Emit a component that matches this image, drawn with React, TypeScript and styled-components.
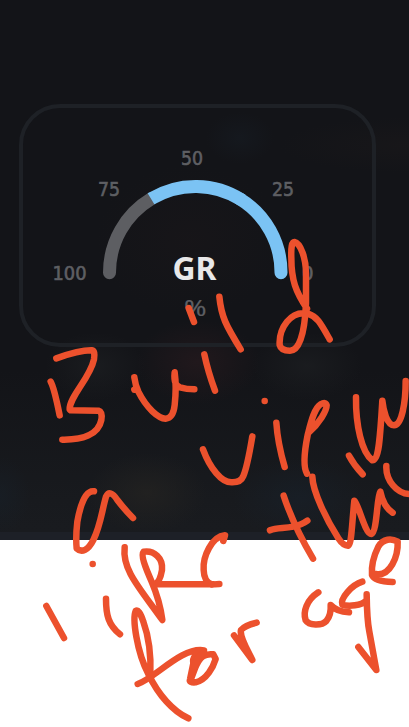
import React from "react";
import styled, { createGlobalStyle } from "styled-components";

const GlobalStyle = createGlobalStyle`
  body { margin: 0; background: #fff; overflow: hidden; }
`;

const Page = styled.main`
  position: relative;
  width: 409px;
  height: 727px;
  overflow: hidden;
  background: #fff;
`;

const Screen = styled.section`
  box-sizing: border-box;
  display: flex;
  flex-direction: column;
  height: 540px;
  padding-top: 104px;
  background:
    radial-gradient(ellipse 62px 42px at 198px 362px, #24191dd0, #24191d00),
    radial-gradient(ellipse 50px 34px at 95px 366px, #1d1f22b0, #1d1f2200),
    radial-gradient(ellipse 55px 34px at 307px 366px, #1d1f22b0, #1d1f2200),
    radial-gradient(ellipse 60px 40px at 147px 493px, #242321c0, #24232100),
    radial-gradient(ellipse 65px 40px at 298px 498px, #182029b0, #18202900),
    radial-gradient(ellipse 30px 40px at 0px 496px, #171f27a0, #171f2700),
    radial-gradient(ellipse 34px 26px at 240px 138px, #161b22a0, #161b2200),
    radial-gradient(ellipse 130px 28px at 409px 145px, #1a181aa0, #1a181a00),
    radial-gradient(ellipse 95px 75px at 190px 240px, #191619a0, #19161900),
    linear-gradient(#131418 0, #131418 370px, #181a1e 500px, #191b1f 530px);
`;

const Card = styled.article`
  box-sizing: border-box;
  width: 357px;
  height: 243px;
  margin-left: 19px;
  border: 4px solid #1e2126;
  border-radius: 41px;
`;

const Gauge = styled.svg`
  display: block;
  margin: -4px;
`;

const Tick = styled.text<{ $unit?: boolean }>`
  font: ${(p) => (p.$unit ? '22.5px "Noto Sans"' : '19.5px "DejaVu Sans Condensed", "DejaVu Sans"')}, sans-serif;
  fill: #5e5f63;
  stroke: #5e5f63;
  stroke-width: ${(p) => (p.$unit ? 0.2 : 0.6)}px;
`;

const Title = styled.text`
  font: 700 33px "Noto Sans", sans-serif;
  fill: #e8e8e9;
`;

const BottomBar = styled.footer`
  height: 8px;
  margin-top: auto;
  background: #1d2027;
`;

const Ink = styled.svg`
  position: absolute;
  inset: 0;
  pointer-events: none;
  fill: none;
  stroke: #ec512d;
  stroke-width: 19.5px;
  stroke-linecap: round;
  stroke-linejoin: round;
`;

const ticks = [
  { label: "100", x: 52.5, y: 280.3, w: 34 },
  { label: "75", x: 98, y: 196.2, w: 22 },
  { label: "50", x: 181, y: 164.8, w: 22 },
  { label: "25", x: 272, y: 196.2, w: 22 },
  { label: "0", x: 302, y: 280, w: 11.5 },
  { label: "%", x: 184, y: 315.5, w: 22.5, unit: true },
];

const notes = [
  {
    x: 30,
    y: 330,
    strokes: [
      "M79 85Q150 60 186 61Q196 62 192 88C180 145 118 200 119 238L122 241L205 242Q218 246 214 270C205 315 155 330 97 329",
      "M62 155Q72 172 89 256",
      "M313 179L316 178M313 142Q316 165 325 185C350 235 385 265 407 266Q430 264 434 225Q440 170 434 127Q430 165 450 172Q470 178 493 178",
      "M523 73Q534 125 555 182",
    ],
  },
  { x: 0, y: 220, strokes: ["M566 264L582 306"] },
  {
    x: 204,
    y: 220,
    strokes: [
      "M46 230C52 290 65 315 110 388",
      "M309 266C275 215 262 180 262 115Q260 66 271 66C290 70 306 115 306 160L306 250C302 345 285 392 258 392C240 392 230 388 227 375C224 325 260 270 312 281C340 290 350 310 377 358",
    ],
  },
  {
    x: 190,
    y: 370,
    strokes: [
      "M224 93L224.1 93",
      "M39 238C60 295 95 338 125 337Q152 338 160 318C172 290 180 240 187 199",
      "M259 158C262 205 272 250 284 291",
      "M356 188C388 160 410 122 410 106Q407 94 392 103C372 115 362 160 353 195C344 240 338 290 351 311",
      "M498 82C497 165 515 248 547 271C567 270 570 210 577 92C580 120 590 165 612 166C635 165 647 100 647 33",
      "M477 257Q492 285 518 313",
    ],
  },
  {
    x: 210,
    y: 460,
    strokes: [
      "M529 18C527 60 560 102 600 102",
      "M221 107C240 165 270 230 309 296",
      "M180 211C200 202 220 206 250 200Q276 194 292 182",
      "M307 50C308 95 350 180 385 235Q400 258 415 257C425 250 425 200 433 122C445 130 465 222 484 222C502 215 500 110 511 95Q520 140 548 158",
      "M498 342C540 350 565 290 563 245C545 235 520 235 505 260C490 290 484 320 486 345Q494 365 548 366",
    ],
  },
  {
    x: 30,
    y: 470,
    strokes: [
      "M192 64C165 60 150 110 142 155C138 190 138 215 140 235C155 250 175 240 190 210C212 165 215 125 228 80Q240 56 262 90Q285 120 309 144",
      "M188 282L188.1 282",
      "M284 232C276 300 330 355 397 450C392 410 380 370 365 335C345 290 332 255 341 245C372 240 400 265 396 300Q390 335 375 343L553 343Q558 342 568 342",
      "M580 213L585 196C545 200 518 260 521 300Q522 335 545 343",
    ],
  },
  {
    x: 30,
    y: 590,
    strokes: [
      "M49 48L102 144",
      "M228 26C228 75 235 105 270 133",
      "M475 385C430 365 385 315 355 252C320 185 307 85 317 63Q327 56 340 95C360 150 363 210 361 257",
      "M323 282C375 265 455 170 522 181Q485 195 490 220L480 268Q477 279 497 277C530 270 550 230 557 207L550 193C525 190 510 198 495 235L484 264",
      "M522 186L500 208L494 230",
    ],
  },
  {
    x: 210,
    y: 560,
    strokes: [
      "M72 226L127 300C110 265 88 230 93 210Q105 196 140 188",
      "M325 97C290 120 278 155 287 181C297 197 335 198 349 183Q364 165 362 135Q380 155 417 157",
      "M457 65C425 75 390 115 397 134C415 140 455 137 468 122M470 103Q471 180 478 215L499 330L445 261",
    ],
  },
];

export default function App() {
  return (
    <Page>
      <GlobalStyle />
      <Screen>
        <Card>
          <Gauge width="357" height="243" viewBox="19 104 357 243">
            <g fill="none" strokeWidth="13">
              <path d="M109.5 272.7A86 86 0 0 1 151.5 198.6" stroke="#5d5e62" strokeLinecap="round" />
              <path d="M281 272.7A86 86 0 0 0 240 199" stroke="#7bc3f4" strokeLinecap="round" />
              <path d="M151 198.8A86 86 0 0 1 242 200.1" stroke="#7bc3f4" />
            </g>
            {ticks.map((t) => (
              <Tick key={t.label} $unit={t.unit} x={t.x} y={t.y} textLength={t.w} lengthAdjust="spacingAndGlyphs">
                {t.label}
              </Tick>
            ))}
            <Title x="172.5" y="279.7" textLength="44" lengthAdjust="spacingAndGlyphs">GR</Title>
          </Gauge>
        </Card>
        <BottomBar />
      </Screen>
      <Ink width="409" height="727" role="img" aria-label="Build a view like this for age">
        {notes.map((n) => (
          <g key={`${n.x}-${n.y}`} transform={`translate(${n.x} ${n.y}) scale(0.33333)`}>
            {n.strokes.map((d) => <path key={d} d={d} />)}
          </g>
        ))}
      </Ink>
    </Page>
  );
}
